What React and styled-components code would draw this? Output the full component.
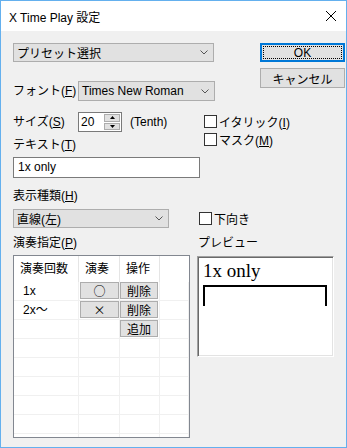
import styled, { createGlobalStyle } from "styled-components";

const GlobalStyle = createGlobalStyle`
  html, body {
    margin: 0;
    padding: 0;
    background: #fff;
  }
  body {
    font-family: "Liberation Sans", "Noto Sans CJK JP", sans-serif;
    font-size: 12px;
    color: #000;
  }
  * {
    box-sizing: border-box;
  }
`;

const Window = styled.div`
  width: 347px;
  height: 448px;
  border: 1px solid #64b0ee;
  display: flex;
  flex-direction: column;
  background: #f0f0f0;
`;

const TitleBar = styled.div`
  height: 30px;
  background: #fff;
  display: flex;
  align-items: center;
  justify-content: space-between;
  padding-left: 8px;
`;

const TitleText = styled.span`
  font-size: 12px;
`;

const CloseBox = styled.div`
  width: 30px;
  height: 30px;
  display: flex;
  align-items: center;
  justify-content: center;
`;

const Body = styled.div`
  flex: 1;
  padding: 12px 0 0 12px;
  display: flex;
  flex-direction: column;
`;

const Top = styled.div`
  display: flex;
  align-items: flex-start;
`;

const LeftCol = styled.div`
  width: 234px;
  display: flex;
  flex-direction: column;
`;

const ButtonCol = styled.div`
  margin-left: 13px;
  width: 85px;
  display: flex;
  flex-direction: column;
  gap: 6px;
`;

const PushButton = styled.div`
  height: ${(p) => p.$h || 19}px;
  background: #e1e1e1;
  border: ${(p) => (p.$default ? "2px solid #0078d7" : "1px solid #adadad")};
  display: flex;
  align-items: center;
  justify-content: center;
  padding: 1px;
`;

const FocusRing = styled.div`
  width: 100%;
  height: 100%;
  border: 1px dotted #000;
  display: flex;
  align-items: center;
  justify-content: center;
`;

const Combo = styled.div`
  width: ${(p) => p.$w}px;
  height: ${(p) => p.$h || 19}px;
  background: #e1e1e1;
  border: 1px solid #adadad;
  display: flex;
  align-items: center;
  justify-content: space-between;
  padding: 0 5px 0 3px;
  flex-shrink: 0;
`;

const Row = styled.div`
  display: flex;
  align-items: center;
  margin-top: ${(p) => p.$mt || 0}px;
  height: ${(p) => (p.$h ? `${p.$h}px` : "auto")};
`;

const Label = styled.div`
  width: ${(p) => (p.$w ? `${p.$w}px` : "auto")};
  line-height: 14px;
  margin-top: ${(p) => p.$mt || 0}px;
  flex-shrink: 0;
  white-space: nowrap;
`;

const SizeBlock = styled.div`
  margin-top: 11px;
  display: grid;
  grid-template-columns: 191px 80px;
`;

const SizeLeft = styled.div`
  display: flex;
  flex-direction: column;
`;

const CheckCol = styled.div`
  padding-top: 3px;
  display: flex;
  flex-direction: column;
  gap: 5px;
`;

const Spin = styled.div`
  width: 44px;
  height: 20px;
  border: 1px solid #7a7a7a;
  background: #fff;
  display: flex;
`;

const SpinValue = styled.div`
  flex: 1;
  padding-left: 2px;
  line-height: 18px;
`;

const SpinButtons = styled.div`
  width: 17px;
  display: flex;
  flex-direction: column;
  gap: 1px;
  padding: 1px 1px 1px 0;
`;

const SpinBtn = styled.div`
  flex: 1;
  background: #e1e1e1;
  border: 1px solid #adadad;
  display: flex;
  align-items: center;
  justify-content: center;
`;

const Unit = styled.span`
  margin-left: 8px;
`;

const CheckRow = styled.div`
  display: flex;
  align-items: center;
  height: 13px;
  margin-left: ${(p) => p.$ml || 0}px;
  white-space: nowrap;
`;

const Box = styled.div`
  width: 13px;
  height: 13px;
  border: 1px solid #333;
  background: #fff;
  margin-right: 2px;
  flex-shrink: 0;
`;

const TextInput = styled.div`
  width: 187px;
  height: 21px;
  margin-top: 5px;
  border: 1px solid #7a7a7a;
  background: #fff;
  padding-left: 4px;
  line-height: 19px;
`;

const Bottom = styled.div`
  display: flex;
  align-items: flex-start;
  margin-top: 5px;
`;

const List = styled.div`
  width: 177px;
  height: 183px;
  border: 1px solid #828790;
  background: #fff;
  overflow: hidden;
  margin-right: 7px;
`;

const GridRow = styled.div`
  display: grid;
  grid-template-columns: 65px 41px 40px 1fr;
  height: ${(p) => (p.$header ? 26 : 19)}px;
`;

const HeadCell = styled.div`
  border-right: ${(p) => (p.$last ? "none" : "1px solid #e5e5e5")};
  padding-left: 6px;
  line-height: 26px;
`;

const Cell = styled.div`
  border-right: 1px solid #f0f0f0;
  border-bottom: 1px solid #f0f0f0;
  padding-left: ${(p) => (p.$text ? 9 : 0)}px;
  line-height: 18px;
  display: flex;
`;

const CellButton = styled.div`
  height: 17px;
  margin-left: ${(p) => p.$ml || 0}px;
  margin-right: ${(p) => p.$mr || 0}px;
  flex: 1;
  background: #e1e1e1;
  border: 1px solid #adadad;
  display: flex;
  align-items: center;
  justify-content: center;
  line-height: 15px;
  font-family: "Noto Sans CJK JP", sans-serif;
`;

const Preview = styled.div`
  margin-top: 1px;
  width: 137px;
  height: 101px;
  background: #fff;
  border-style: solid;
  border-width: 1px;
  border-color: #a0a0a0 #fff #fff #a0a0a0;
  box-shadow: inset 1px 1px 0 #696969, inset -1px -1px 0 #e3e3e3;
  padding: 4px 0 0 5px;
`;

const PreviewText = styled.div`
  font-family: "Liberation Serif", serif;
  font-size: 19px;
  line-height: 19px;
`;

const Bracket = styled.div`
  width: 124px;
  height: 21px;
  margin-top: 5px;
  border: 2px solid #000;
  border-bottom: none;
`;

const Chevron = () => (
  <svg width="8" height="5" viewBox="0 0 8 5">
    <path d="M0.5 0.5 L4 4 L7.5 0.5" fill="none" stroke="#555" strokeWidth="1" />
  </svg>
);

const Dropdown = ({ w, h, children }) => (
  <Combo $w={w} $h={h}>
    <span>{children}</span>
    <Chevron />
  </Combo>
);

const Check = ({ children, ml }) => (
  <CheckRow $ml={ml}>
    <Box />
    <span>{children}</span>
  </CheckRow>
);

const rows = [
  { count: "1x", play: "○", op: "削除" },
  { count: "2x〜", play: "×", op: "削除" },
  { count: "", play: null, op: "追加" },
  {},
  {},
  {},
  {},
  {},
  {},
];

export default function App() {
  return (
    <>
      <GlobalStyle />
      <Window>
        <TitleBar>
          <TitleText>X Time Play 設定</TitleText>
          <CloseBox>
            <svg width="10" height="10" viewBox="0 0 10 10">
              <path d="M0 0 L10 10 M10 0 L0 10" stroke="#000" strokeWidth="1" />
            </svg>
          </CloseBox>
        </TitleBar>
        <Body>
          <Top>
            <LeftCol>
              <Dropdown w={201}>プリセット選択</Dropdown>
              <Row $mt={19} $h={20}>
                <Label $w={65}>
                  フォント(<u>F</u>)
                </Label>
                <Dropdown w={137} h={20}>
                  Times New Roman
                </Dropdown>
              </Row>
              <SizeBlock>
                <SizeLeft>
                  <Row $h={20}>
                    <Label $w={65}>
                      サイズ(<u>S</u>)
                    </Label>
                    <Spin>
                      <SpinValue>20</SpinValue>
                      <SpinButtons>
                        <SpinBtn>
                          <svg width="5" height="3" viewBox="0 0 5 3">
                            <path d="M2.5 0 L5 3 L0 3 Z" fill="#000" />
                          </svg>
                        </SpinBtn>
                        <SpinBtn>
                          <svg width="5" height="3" viewBox="0 0 5 3">
                            <path d="M0 0 L5 0 L2.5 3 Z" fill="#000" />
                          </svg>
                        </SpinBtn>
                      </SpinButtons>
                    </Spin>
                    <Unit>(Tenth)</Unit>
                  </Row>
                  <Label $mt={6}>
                    テキスト(<u>T</u>)
                  </Label>
                  <TextInput>1x only</TextInput>
                </SizeLeft>
                <CheckCol>
                  <Check>
                    イタリック(<u>I</u>)
                  </Check>
                  <Check>
                    マスク(<u>M</u>)
                  </Check>
                </CheckCol>
              </SizeBlock>
            </LeftCol>
            <ButtonCol>
              <PushButton $default>
                <FocusRing>OK</FocusRing>
              </PushButton>
              <PushButton $h={20}>キャンセル</PushButton>
            </ButtonCol>
          </Top>

          <Label $mt={11}>
            表示種類(<u>H</u>)
          </Label>
          <Row $mt={6}>
            <Dropdown w={156}>直線(左)</Dropdown>
            <Check ml={30}>下向き</Check>
          </Row>

          <Row $mt={8}>
            <Label $w={185}>
              演奏指定(<u>P</u>)
            </Label>
            <Label>プレビュー</Label>
          </Row>

          <Bottom>
            <List>
              <GridRow $header>
                <HeadCell>演奏回数</HeadCell>
                <HeadCell>演奏</HeadCell>
                <HeadCell>操作</HeadCell>
                <HeadCell $last />
              </GridRow>
              {rows.map((r, i) => (
                <GridRow key={i}>
                  <Cell $text>{r.count}</Cell>
                  <Cell>
                    {r.play && <CellButton $ml={1}>{r.play}</CellButton>}
                  </Cell>
                  <Cell>{r.op && <CellButton $mr={1}>{r.op}</CellButton>}</Cell>
                  <Cell />
                </GridRow>
              ))}
            </List>
            <Preview>
              <PreviewText>1x only</PreviewText>
              <Bracket />
            </Preview>
          </Bottom>
        </Body>
      </Window>
    </>
  );
}
